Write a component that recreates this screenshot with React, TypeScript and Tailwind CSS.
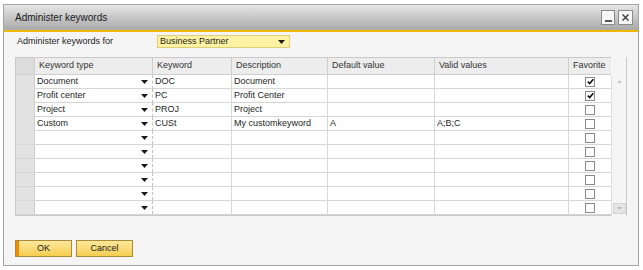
import React from "react";

type Row = {
  type: string;
  keyword: string;
  desc: string;
  def: string;
  valid: string;
  fav: boolean;
};

const rows: Row[] = [
  { type: "Document", keyword: "DOC", desc: "Document", def: "", valid: "", fav: true },
  { type: "Profit center", keyword: "PC", desc: "Profit Center", def: "", valid: "", fav: true },
  { type: "Project", keyword: "PROJ", desc: "Project", def: "", valid: "", fav: false },
  { type: "Custom", keyword: "CUSt", desc: "My customkeyword", def: "A", valid: "A;B;C", fav: false },
  { type: "", keyword: "", desc: "", def: "", valid: "", fav: false },
  { type: "", keyword: "", desc: "", def: "", valid: "", fav: false },
  { type: "", keyword: "", desc: "", def: "", valid: "", fav: false },
  { type: "", keyword: "", desc: "", def: "", valid: "", fav: false },
  { type: "", keyword: "", desc: "", def: "", valid: "", fav: false },
  { type: "", keyword: "", desc: "", def: "", valid: "", fav: false },
];

const cols = "grid grid-cols-[19px_118px_79px_96px_107px_134px_42px]";

const Arrow = () => (
  <svg width="7" height="4" viewBox="0 0 7 4" className="shrink-0">
    <path d="M0 0h7L3.5 4z" fill="#1a1a1a" />
  </svg>
);

const CheckBox = ({ checked }: { checked: boolean }) => (
  <div className="w-[10px] h-[10px] border border-[#8a8a8a] bg-white flex items-center justify-center">
    {checked && (
      <svg width="7" height="7" viewBox="0 0 7 7">
        <path d="M0.8 3.6L2.7 5.5L6.3 1.2" stroke="#111" strokeWidth="1.6" fill="none" />
      </svg>
    )}
  </div>
);

const App: React.FC = () => {
  return (
    <div
      className="w-[643px] h-[270px] bg-white pt-[4px] pl-[3px] text-[9px] text-[#1e1e1e]"
      style={{ fontFamily: '"Liberation Sans", Arial, sans-serif' }}
    >
      <div className="w-[636px] h-[262px] border border-[#a4a4a4] bg-[#f5f5f5] flex flex-col">
        {/* title bar */}
        <div className="h-[25px] bg-linear-to-b from-[#e6e6e6] to-[#a9a9a9] flex items-center justify-between pl-[11px] pr-[5px]">
          <span className="text-[10px] text-[#1a1a1a]">Administer keywords</span>
          <div className="flex gap-[3px]">
            <div className="w-[14px] h-[15px] bg-[#f6f6f6] border border-[#8c8c8c] flex items-end justify-center pb-[2px]">
              <div className="w-[7px] h-[2px] bg-[#555]" />
            </div>
            <div className="w-[15px] h-[15px] bg-[#f6f6f6] border border-[#8c8c8c] flex items-center justify-center">
              <svg width="7" height="7" viewBox="0 0 7 7">
                <path d="M0.5 0.5L6.5 6.5M6.5 0.5L0.5 6.5" stroke="#444" strokeWidth="1.5" />
              </svg>
            </div>
          </div>
        </div>
        <div className="h-[2px] bg-[#f2b705]" />

        <div className="px-[11px] flex flex-col">
          {/* selector row */}
          <div className="flex items-center h-[13px] mt-[3px]">
            <span className="w-[142px] pl-[2px] text-[#222]">Administer keywords for</span>
            <div className="w-[133px] h-[13px] bg-[#fdf1a2] border border-[#e0cf7a] flex items-center justify-between pl-[2px] pr-[4px]">
              <span>Business Partner</span>
              <Arrow />
            </div>
          </div>

          {/* grid */}
          <div className="flex mt-[9px]">
            <div className="border border-[#c9c9c9] border-r-0 bg-white">
              <div className={`${cols} h-[17px] bg-[#ededed] border-b border-[#cfcfcf] text-[#333]`}>
                <div className="bg-[#dcdcdc] border-r border-[#cfcfcf]" />
                {["Keyword type", "Keyword", "Description", "Default value", "Valid values"].map((h) => (
                  <div key={h} className="border-r border-[#cfcfcf] pl-[4px] flex items-center">
                    {h}
                  </div>
                ))}
                <div className="pl-[4px] flex items-center">Favorite</div>
              </div>
              {rows.map((r, i) => (
                <div key={i} className={`${cols} h-[14px] border-b border-[#d6d6d6]`}>
                  <div className="bg-[#e2e2e2] border-r border-[#cfcfcf]" />
                  <div className="border-r border-dashed border-[#c4c4c4] flex items-center justify-between pl-[2px] pr-[4px]">
                    <span>{r.type}</span>
                    <Arrow />
                  </div>
                  <div className="border-r border-[#d6d6d6] pl-[2px] flex items-center">{r.keyword}</div>
                  <div className="border-r border-[#d6d6d6] pl-[2px] flex items-center">{r.desc}</div>
                  <div className="border-r border-[#d6d6d6] pl-[2px] flex items-center">{r.def}</div>
                  <div className="border-r border-[#d6d6d6] pl-[2px] flex items-center">{r.valid}</div>
                  <div className="flex items-center justify-center">
                    <CheckBox checked={r.fav} />
                  </div>
                </div>
              ))}
            </div>
            {/* scrollbar */}
            <div className="w-[17px] flex flex-col border-r border-[#c9c9c9]">
              <div className="h-[19px]" />
              <div className="flex-1 flex flex-col justify-between items-center pb-[2px] border-l border-[#dedede]">
                <div className="w-[13px] h-[10px] flex items-center justify-center">
                  <svg width="5" height="3" viewBox="0 0 5 3">
                    <path d="M0 3L2.5 0L5 3z" fill="#c8c8c8" />
                  </svg>
                </div>
                <div className="w-[13px] h-[11px] bg-[#e4e4e4] border border-[#d4d4d4] flex items-center justify-center">
                  <svg width="5" height="3" viewBox="0 0 5 3">
                    <path d="M0 0h5L2.5 3z" fill="#bdbdbd" />
                  </svg>
                </div>
              </div>
            </div>
          </div>

          {/* buttons */}
          <div className="flex gap-[4px] mt-[24px]">
            <button className="relative w-[57px] h-[17px] bg-linear-to-b from-[#fde99a] to-[#f6cd4e] border border-[#a88a3a] text-[9px] text-[#222] flex items-center justify-center">
              <span className="absolute left-0 top-0 bottom-0 w-[3px] bg-[#f08a00]" />
              OK
            </button>
            <button className="w-[57px] h-[17px] bg-linear-to-b from-[#fde99a] to-[#f6cd4e] border border-[#a88a3a] text-[9px] text-[#222] flex items-center justify-center">
              Cancel
            </button>
          </div>
        </div>
      </div>
    </div>
  );
};

export default App;
